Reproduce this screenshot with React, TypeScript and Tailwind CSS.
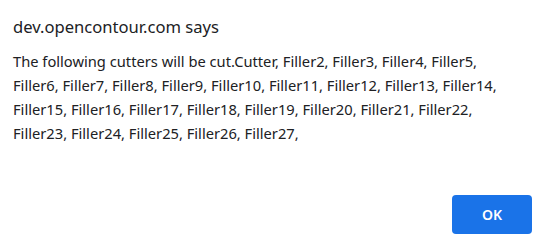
const lines = [
  "The following cutters will be cut.Cutter, Filler2, Filler3, Filler4, Filler5,",
  "Filler6, Filler7, Filler8, Filler9, Filler10, Filler11, Filler12, Filler13, Filler14,",
  "Filler15, Filler16, Filler17, Filler18, Filler19, Filler20, Filler21, Filler22,",
  "Filler23, Filler24, Filler25, Filler26, Filler27,",
]

export default function App() {
  return (
    <div className="w-[545px] h-[242px] bg-white flex flex-col font-['Noto_Sans',sans-serif] text-[#202124]">
      <div className="pl-[13px] pt-[15px] text-[16.6px] leading-[24px]">dev.opencontour.com says</div>
      <div className="pl-[13px] pt-[10px] text-[14.7px] leading-[24px] text-[#202124]">
        {lines.map((l) => (
          <div key={l} className="whitespace-nowrap">
            {l}
          </div>
        ))}
      </div>
      <div className="flex-1" />
      <div className="flex justify-end pr-[13px] pb-[8px]">
        <button className="w-[80px] h-[39px] rounded-[4px] bg-[#1a73e8] text-white text-[14px] font-semibold">
          OK
        </button>
      </div>
    </div>
  )
}
